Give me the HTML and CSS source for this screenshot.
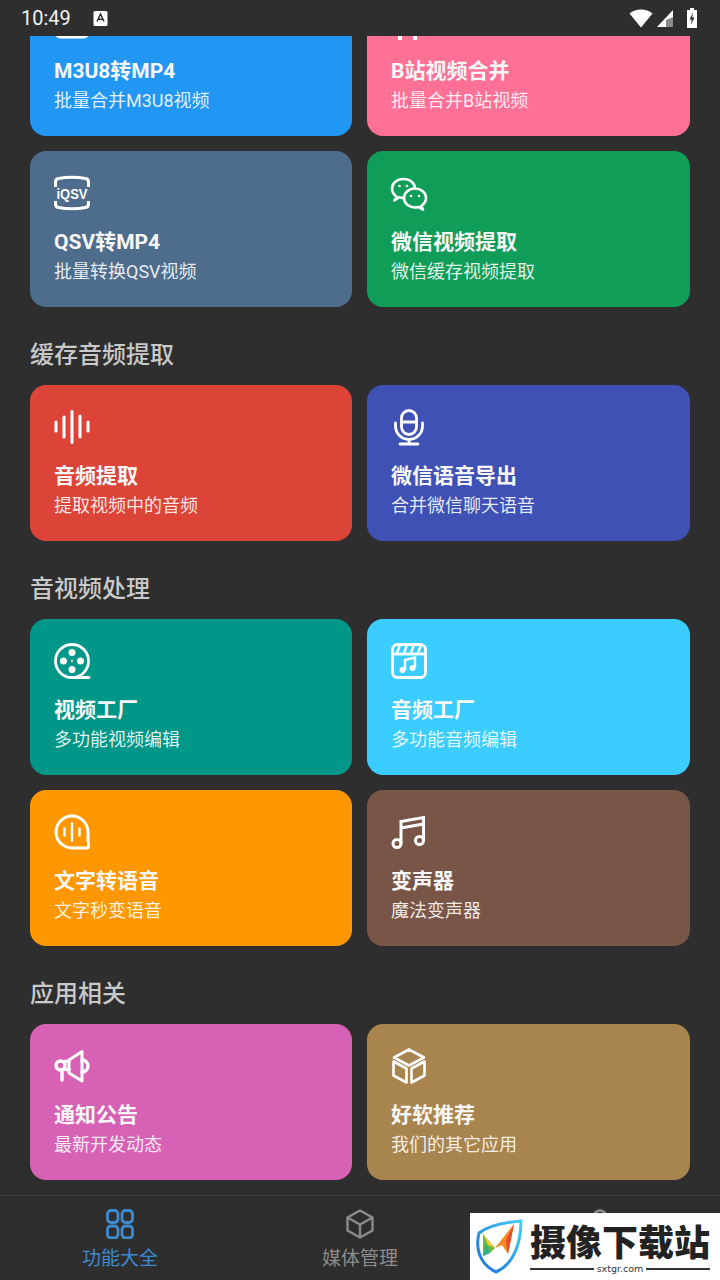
FILE: index.html
```html
<!DOCTYPE html>
<html lang="zh-CN">
<head>
  <meta charset="UTF-8">
  <meta name="viewport" content="width=device-width, initial-scale=1.0">
  <title>功能大全</title>
  <link rel="stylesheet" href="styles.css">
</head>
<body>
  <div class="status-bar">
    <span class="clock">10:49</span>
    <svg class="status-a" viewBox="0 0 15 15"><rect x="0.500" y="0" width="14" height="15" rx="1.500" fill="#fff"/><path d="M4 10.500 7.500 3l3.500 7.500M5 8.200h5" fill="none" stroke="#2e2e2e" stroke-width="1.500"/></svg>
    <span class="status-right">
      <svg width="24" height="20" viewBox="0 0 24 20"><path d="M0.500 5.500C6.500 0 17.500 0 23.500 5.500L12 19.500Z" fill="#fff"/></svg>
      <svg width="18" height="20" viewBox="0 0 18 20"><path d="M17 2V19H1Z" fill="#fff"/><path d="M17 9V19H10V12Z" fill="#8a8a8a"/></svg>
      <svg width="10" height="20" viewBox="0 0 10 20"><path d="M3 0h4v2h3v18H0V2h3Z" fill="#fff"/><path d="M6 4.500 2.500 11.500h2.200L4 16.500l3.500-7H5.300Z" fill="#2e2e2e"/></svg>
    </span>
  </div>

  <main class="content">
    <div class="scroll">
      <div class="grid">
        <div class="card blue">
          <svg class="icon" viewBox="0 0 36 36"><rect x="1.500" y="3" width="33" height="30" rx="5" fill="none" stroke="#fff" stroke-width="3"/></svg>
          <div class="card-title">M3U8转MP4</div>
          <div class="card-sub">批量合并M3U8视频</div>
        </div>
        <div class="card pink">
          <svg class="icon" viewBox="0 0 36 36"><path d="M7 31h4v5H7ZM22 31h4v5h-4Z" fill="#fff"/></svg>
          <div class="card-title">B站视频合并</div>
          <div class="card-sub">批量合并B站视频</div>
        </div>
        <div class="card slate">
          <svg class="icon" viewBox="0 0 36 36">
            <path d="M1.500 12V7q0-3 3-3.500 13.500-2.500 27 0 3 .5 3 3.500v5M1.500 26v3q0 3 3 3.500 13.500 2.500 27 0 3-.5 3-3.500v-3" fill="none" stroke="#fff" stroke-width="3"/>
            <text class="qsv-text" x="18" y="23.500" textLength="31" lengthAdjust="spacingAndGlyphs">iQSV</text>
          </svg>
          <div class="card-title">QSV转MP4</div>
          <div class="card-sub">批量转换QSV视频</div>
        </div>
        <div class="card green">
          <svg class="icon" viewBox="0 0 36 36" fill="none" stroke="#fff" stroke-width="2.600" stroke-linejoin="round">
            <path d="M6 22c-3-2-5-5-5-8.500C1 8 6 4 12.500 4S24 8 24 13.500 19 23 12.500 23c-1.500 0-3-.2-4.500-.7L3.500 25.500Z"/>
            <path d="M30 31c3-1.800 5-4.700 5-8 0-5.500-5-9.500-11-9.500S13 17.500 13 23s5 9.500 11 9.500c1.500 0 2.500-.2 3.500-.5l4.500 2.500Z" fill="#0f9d58"/>
            <g fill="#fff" stroke="none"><circle cx="8.500" cy="11" r="1.300"/><circle cx="16" cy="11" r="1.300"/><circle cx="20" cy="21" r="1.300"/><circle cx="28" cy="21" r="1.300"/></g>
          </svg>
          <div class="card-title">微信视频提取</div>
          <div class="card-sub">微信缓存视频提取</div>
        </div>
      </div>

      <h2 class="section-title">缓存音频提取</h2>
      <div class="grid">
        <div class="card red">
          <svg class="icon" viewBox="0 0 36 36" stroke="#fff" stroke-width="3" stroke-linecap="round"><path d="M2 13v9M10 8v20M18 2.500v31M26 7v21M34 13v9"/></svg>
          <div class="card-title">音频提取</div>
          <div class="card-sub">提取视频中的音频</div>
        </div>
        <div class="card indigo">
          <svg class="icon" viewBox="0 0 36 36" fill="none" stroke="#fff" stroke-width="2.800" stroke-linecap="round">
            <rect x="10.500" y="1.500" width="15" height="24" rx="7.500"/>
            <path d="M11 13h14M4.500 14v3a13.500 13.500 0 0 0 27 0v-3M18 31v3.500M9 35h18"/>
          </svg>
          <div class="card-title">微信语音导出</div>
          <div class="card-sub">合并微信聊天语音</div>
        </div>
      </div>

      <h2 class="section-title">音视频处理</h2>
      <div class="grid">
        <div class="card teal">
          <svg class="icon" viewBox="0 0 36 36" fill="none" stroke="#fff" stroke-width="2.800" stroke-linecap="round">
            <circle cx="18" cy="18" r="16.500"/>
            <path d="M18 34.500H35"/>
            <g fill="#fff" stroke="none"><circle cx="18" cy="9.500" r="3.500"/><circle cx="18" cy="26.500" r="3.500"/><circle cx="9.500" cy="18" r="3.500"/><circle cx="26.500" cy="18" r="3.500"/><circle cx="18" cy="18" r="1"/></g>
          </svg>
          <div class="card-title">视频工厂</div>
          <div class="card-sub">多功能视频编辑</div>
        </div>
        <div class="card sky">
          <svg class="icon" viewBox="0 0 36 36" fill="none" stroke="#fff" stroke-width="2.800">
            <rect x="1.500" y="1.500" width="33" height="33" rx="5"/>
            <path d="M2 11h32" />
            <path d="M6 10l3-8M13 10l3-8M20 10l3-8M27 10l3-8" stroke-width="2.400"/>
            <path d="M14 27V17l10-2.500v10" stroke-width="2.400"/>
            <circle cx="11.500" cy="27" r="3" fill="#fff" stroke="none"/><circle cx="21.500" cy="25" r="3" fill="#fff" stroke="none"/>
          </svg>
          <div class="card-title">音频工厂</div>
          <div class="card-sub">多功能音频编辑</div>
        </div>
        <div class="card orange">
          <svg class="icon" viewBox="0 0 36 36" fill="none" stroke="#fff" stroke-width="3" stroke-linecap="round">
            <path d="M34 27V18A16 16 0 1 0 18 34H33q1.500 0 1.500-1.500V29"/>
            <path d="M10.500 14.500v7M18 9.500v17M25.500 14.500v7" stroke-width="2.400"/>
          </svg>
          <div class="card-title">文字转语音</div>
          <div class="card-sub">文字秒变语音</div>
        </div>
        <div class="card brown">
          <svg class="icon" viewBox="0 0 36 36" fill="none" stroke="#fff" stroke-width="3">
            <circle cx="6" cy="29.500" r="4"/><circle cx="28.500" cy="26.500" r="4"/>
            <path d="M10 29.500V7.500L32.500 3.500v23M10 14l22.500-4"/>
          </svg>
          <div class="card-title">变声器</div>
          <div class="card-sub">魔法变声器</div>
        </div>
      </div>

      <h2 class="section-title">应用相关</h2>
      <div class="grid">
        <div class="card magenta">
          <svg class="icon" viewBox="0 0 36 36" fill="none" stroke="#fff" stroke-width="3" stroke-linejoin="round" stroke-linecap="round">
            <circle cx="6.500" cy="17.500" r="4.500" stroke-width="3.400"/>
            <path d="M15 12 28 3.500V33L15 25Z"/>
            <path d="M11 13.500h4M11 21.500h4M28 12a6 6 0 0 1 0 12M8 23v9" stroke-width="3.400"/>
          </svg>
          <div class="card-title">通知公告</div>
          <div class="card-sub">最新开发动态</div>
        </div>
        <div class="card tan">
          <svg class="icon" viewBox="0 0 36 36" fill="none" stroke="#fff" stroke-width="2.600" stroke-linejoin="round">
            <path d="M18 1.500 33 9.500 18 17.500 3 9.500ZM2.500 13.500l13 7v14l-13-7ZM33.500 13.500l-13 7v14l13-7Z"/>
          </svg>
          <div class="card-title">好软推荐</div>
          <div class="card-sub">我们的其它应用</div>
        </div>
      </div>
    </div>
  </main>

  <nav class="bottom-nav">
    <div class="nav-item active">
      <svg class="nav-icon" viewBox="0 0 28 30" fill="none" stroke="#3d8bd0" stroke-width="2.800">
        <rect x="1.500" y="1.500" width="10.500" height="12" rx="3.500"/><rect x="16" y="1.500" width="10.500" height="12" rx="3.500"/>
        <rect x="1.500" y="17" width="10.500" height="12" rx="3.500"/><rect x="16" y="17" width="10.500" height="12" rx="3.500"/>
      </svg>
      <span>功能大全</span>
    </div>
    <div class="nav-item">
      <svg class="nav-icon" viewBox="0 0 28 30" fill="none" stroke="#8c8c8c" stroke-width="2.400" stroke-linejoin="round">
        <path d="M14 1.500 26.500 8.500v13L14 28.500 1.500 21.500v-13ZM1.500 8.500 14 15.500 26.500 8.500M14 15.500v13"/>
      </svg>
      <span>媒体管理</span>
    </div>
    <div class="nav-item">
      <svg class="nav-icon" viewBox="0 0 28 30" fill="none" stroke="#8c8c8c" stroke-width="2.400">
        <circle cx="14" cy="8" r="6.500"/><path d="M2 28c1-7 6-10 12-10s11 3 12 10"/>
      </svg>
    </div>
  </nav>

  <div class="watermark">
    <svg class="wm-logo" viewBox="0 0 48 55">
      <defs>
        <linearGradient id="shield" x1="1" y1="0" x2="0" y2="1">
          <stop offset="0" stop-color="#45cdf5"/>
          <stop offset="1" stop-color="#1c6fdc"/>
        </linearGradient>
      </defs>
      <path d="M46 2C33 3 14 6 4 14 1 26 2 44 21 53 35 47 46 30 46 2Z" fill="#fff" stroke="url(#shield)" stroke-width="3"/>
      <path d="M8 15 20 29 15 34 8 37Z" fill="#63bb46"/>
      <path d="M8 15 20 29 13 26Z" fill="#f3cb2c"/>
      <path d="M8 37 15 34 11 25Z" fill="#2fae8c"/>
      <path d="M39 5 33 35 27 26 20 29Z" fill="#f58a25"/>
      <path d="M39 5 33 35 31 21Z" fill="#e5482d"/>
    </svg>
    <div class="wm-text">
      <div class="wm-name">摄像下载站</div>
      <div class="wm-url"><span class="wm-line"></span>sxtgr.com<span class="wm-line"></span></div>
    </div>
  </div>
</body>
</html>
```

FILE: styles.css
```css
* {
  box-sizing: border-box;
}

body {
  margin: 0;
  width: 720px;
  height: 1280px;
  overflow: hidden;
  position: relative;
  display: flex;
  flex-direction: column;
  background-color: #2e2e2e;
  font-family: Roboto, "Noto Sans CJK SC", sans-serif;
  color: #fff;
}

.status-bar {
  height: 36px;
  flex: none;
  display: flex;
  align-items: center;
  padding: 0 23px 0 21px;
}
.clock {
  font-size: 20px;
  color: #f2f2f2;
}
.status-a {
  width: 15px;
  height: 15px;
  margin-left: 22px;
}
.status-right {
  margin-left: auto;
  display: flex;
  align-items: center;
  gap: 3px;
}
.status-right svg:last-child {
  margin-left: 10px;
}

.content {
  flex: 1;
  overflow: hidden;
}
.scroll {
  margin-top: -56px;
}

.grid {
  display: grid;
  grid-template-columns: 322px 323px;
  gap: 15px;
  padding: 0 30px;
}

.card {
  height: 156px;
  border-radius: 16px;
  padding: 24px 24px 0;
}
.icon {
  display: block;
  width: 36px;
  height: 36px;
  overflow: visible;
}
.card-title {
  margin-top: 16px;
  font-size: 21px;
  line-height: 30px;
  font-weight: 700;
  color: #f7f7f7;
}
.card-sub {
  font-size: 18px;
  line-height: 28px;
  margin-top: 1px;
  color: rgba(255, 255, 255, 0.88);
}
.qsv-text {
  font-family: "Liberation Sans", sans-serif;
  font-size: 14px;
  font-weight: 700;
  fill: #fff;
  text-anchor: middle;
}

.blue { background-color: #2196f3; }
.pink { background-color: #ff7097; }
.slate { background-color: #4e6d8c; }
.green { background-color: #0f9d58; }
.red { background-color: #db4437; }
.indigo { background-color: #3f51b5; }
.teal { background-color: #009688; }
.sky { background-color: #3bcdff; }
.orange { background-color: #ff9800; }
.brown { background-color: #795548; }
.magenta { background-color: #d762b5; }
.tan { background-color: #a8844e; }

.section-title {
  margin: 0;
  padding: 31px 30px 13px;
  font-size: 24px;
  line-height: 34px;
  font-weight: 500;
  color: #c9c9c9;
}

.bottom-nav {
  height: 85px;
  flex: none;
  display: flex;
  border-top: 1px solid #3b3b3b;
}
.nav-item {
  flex: 1;
  display: flex;
  flex-direction: column;
  align-items: center;
  padding-top: 13px;
  font-size: 19px;
  line-height: 28px;
  color: #8c8c8c;
}
.nav-item.active {
  color: #3d8bd0;
}
.nav-icon {
  width: 28px;
  height: 30px;
  margin-bottom: 6px;
}

.watermark {
  position: absolute;
  right: 0;
  bottom: 0;
  width: 250px;
  height: 67px;
  background-color: #fff;
  display: flex;
  align-items: center;
  padding-left: 5px;
}
.wm-logo {
  width: 48px;
  height: 55px;
  flex: none;
}
.wm-text {
  margin-left: 7px;
  width: 180px;
}
.wm-name {
  font-family: "Noto Sans CJK SC", sans-serif;
  font-size: 36px;
  line-height: 44px;
  font-weight: 900;
  color: #222;
  white-space: nowrap;
}
.wm-url {
  display: flex;
  align-items: center;
  gap: 3px;
  font-family: "DejaVu Sans", sans-serif;
  font-size: 9.500px;
  line-height: 14px;
  color: #333;
}
.wm-line {
  flex: 1;
  height: 2px;
  background-color: #333;
}
```
